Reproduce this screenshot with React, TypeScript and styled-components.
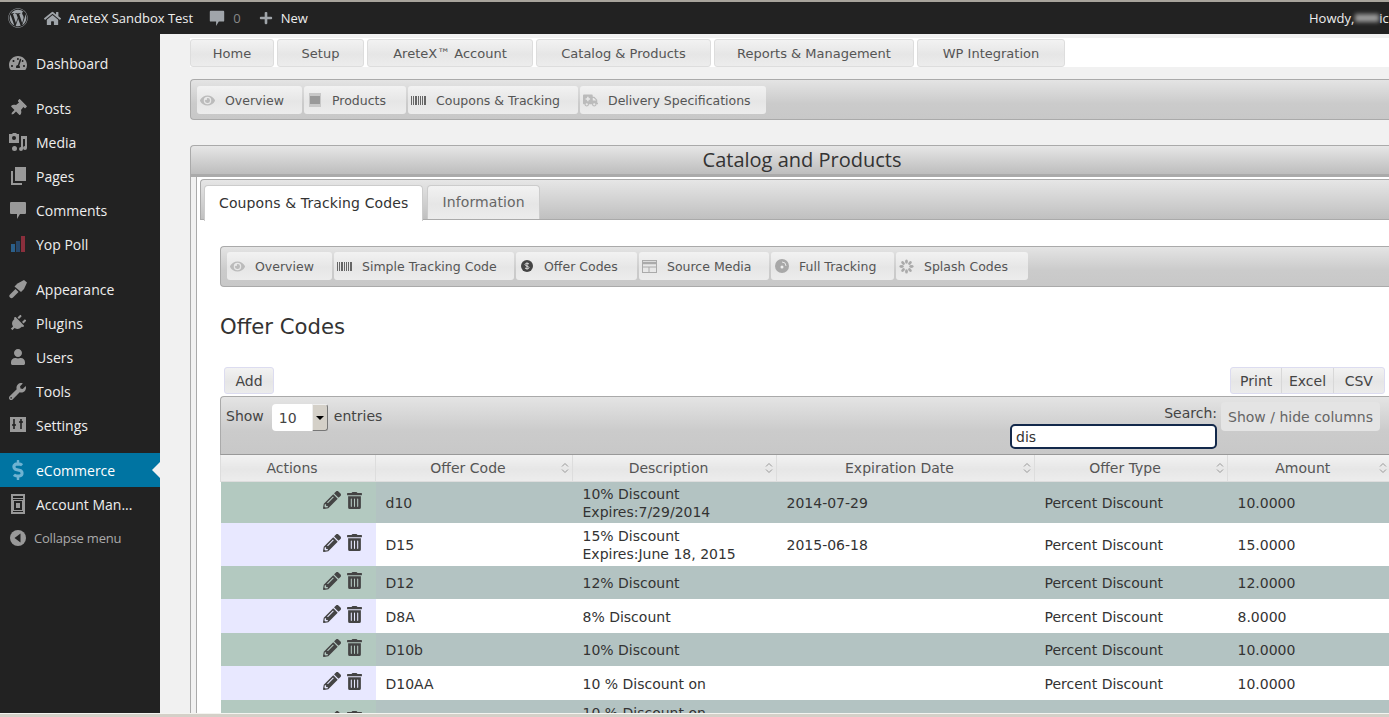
import React from 'react';
import styled, { createGlobalStyle } from 'styled-components';
import {
  FaWordpress, FaHome, FaTachometerAlt, FaThumbtack, FaPlug, FaUser, FaWrench,
  FaDollarSign, FaEye, FaAmbulance, FaPencilAlt, FaTrashAlt, FaPlus,
} from 'react-icons/fa';

const Global = createGlobalStyle`
  html, body { margin: 0; padding: 0; height: 717px; overflow: hidden; background: #f1f1f1; }
  * { box-sizing: border-box; }
`;

const Tilted = styled.span`
  display: flex;
  transform: rotate(45deg);
`;

const Comment = ({ size = 16 }: { size?: number }) => (
  <svg width={size} height={size} viewBox="0 0 20 20" fill="currentColor">
    <path d="M3 2h14a1 1 0 0 1 1 1v10a1 1 0 0 1-1 1h-5l-3 5v-5H3a1 1 0 0 1-1-1V3a1 1 0 0 1 1-1z" />
  </svg>
);

const BrushIcon = () => (
  <svg width="20" height="20" viewBox="0 0 20 20" fill="currentColor">
    <path d="M2 15.5l5.5-5.5 3 3-5.5 5.500c-1 1-2 1-3 0s-1-2 0-3z" />
    <path d="M6.500 7.500l3-3L16 1l3 2.500-3 6.500-3 3z" />
  </svg>
);

const MediaIcon = () => (
  <svg width="20" height="20" viewBox="0 0 20 20" fill="currentColor">
    <path d="M1 2h3l1-1h3l1 1h2v9H1z" />
    <circle cx="6" cy="6" r="2" fill="#222" />
    <path d="M13 4h6v12a2 2 0 1 1-2-2V7h-2v10a2 2 0 1 1-2-2z" />
    <rect x="4" y="14" width="5" height="5" rx="2.5" />
  </svg>
);

const PagesIcon = () => (
  <svg width="20" height="20" viewBox="0 0 20 20" fill="currentColor">
    <path d="M7 1h11v14H7z" />
    <path d="M3 5h2v12h9v2H3z" />
  </svg>
);

const PollIcon = () => (
  <svg width="20" height="20" viewBox="0 0 20 20">
    <rect x="3" y="10" width="4" height="8" fill="#2b5f8a" />
    <rect x="8" y="7" width="4" height="11" fill="#27486b" />
    <rect x="13" y="2" width="4" height="16" fill="#8a2f3c" />
  </svg>
);

const SettingsIcon = () => (
  <svg width="20" height="20" viewBox="0 0 20 20">
    <rect x="2" y="2" width="16" height="15" fill="currentColor" />
    <path d="M6 4v10M13 4v10M4 10h4M11 7h4" stroke="#222" strokeWidth="1.6" />
  </svg>
);

const AccountIcon = () => (
  <svg width="20" height="20" viewBox="0 0 20 20" fill="currentColor">
    <path fillRule="evenodd" d="M3 0h14v20H3zM5 2v2h10V2zM5 5v1h10V5zM6 7v9h8V7zM5 17v1h10v-1z" />
    <rect x="8" y="9" width="4" height="5" />
  </svg>
);

const CollapseIcon = () => (
  <svg width="16" height="16" viewBox="0 0 16 16">
    <circle cx="8" cy="8" r="8" fill="currentColor" />
    <path d="M10.5 3.5v9L4.5 8z" fill="#222" />
  </svg>
);

const Bars = () => (
  <svg width="15" height="9" viewBox="0 0 15 10" fill="#666" preserveAspectRatio="none">
    <path d="M0 0h1v10H0zM2 0h1v10H2zM4 0h2v10H4zM7 0h1v10H7zM9 0h1v10H9zM11 0h1v10h-1zM13 0h2v10h-2z" />
  </svg>
);

const Book = () => (
  <svg width="12" height="14" viewBox="0 0 12 14">
    <rect width="12" height="14" fill="#c8c8c8" />
    <rect x="1" y="3" width="10" height="8" fill="#999" />
  </svg>
);

const CoinDark = () => (
  <svg width="14" height="14" viewBox="0 0 14 14">
    <circle cx="7" cy="7" r="6" fill="#444" />
    <path d="M9 5c-1-1-4-1-4 .6S9 7 9 8.600 6 10 5 9M7 3.500v7" stroke="#ddd" strokeWidth="1" fill="none" />
  </svg>
);

const Sheet = () => (
  <svg width="15" height="13" viewBox="0 0 15 13" fill="none" stroke="#aaa">
    <rect x=".5" y=".5" width="14" height="12" />
    <path d="M1 3h13" strokeWidth="2.500" />
    <path d="M1 7h13M7 7v5" />
  </svg>
);

const Disc = () => (
  <svg width="14" height="14" viewBox="0 0 14 14">
    <circle cx="7" cy="7" r="7" fill="#a8a8a8" />
    <path d="M7 3a4 4 0 0 1 4 4" stroke="#e8e8e8" fill="none" />
    <circle cx="7" cy="8" r="1.5" fill="#eee" />
  </svg>
);

const Splash = () => (
  <svg width="15" height="15" viewBox="0 0 15 15" fill="#aaa">
    {[0, 45, 90, 135, 180, 225, 270, 315].map(a => (
      <ellipse key={a} cx="7.5" cy="2.6" rx="1.4" ry="2.2" transform={`rotate(${a} 7.5 7.5)`} />
    ))}
  </svg>
);

const SortMark = () => (
  <SortIcon width="8" height="12" viewBox="0 0 8 12" fill="none" stroke="#999">
    <path d="M1 4.5L4 1.5l3 3M1 7.5l3 3 3-3" />
  </SortIcon>
);

const sideItems = [
  { group: [{ label: 'Dashboard', icon: <FaTachometerAlt size={18} /> }] },
  {
    group: [
      { label: 'Posts', icon: <Tilted><FaThumbtack size={17} /></Tilted> },
      { label: 'Media', icon: <MediaIcon /> },
      { label: 'Pages', icon: <PagesIcon /> },
      { label: 'Comments', icon: <Comment size={20} /> },
      { label: 'Yop Poll', icon: <PollIcon /> },
    ],
  },
  {
    group: [
      { label: 'Appearance', icon: <BrushIcon /> },
      { label: 'Plugins', icon: <Tilted><FaPlug size={17} /></Tilted> },
      { label: 'Users', icon: <FaUser size={16} /> },
      { label: 'Tools', icon: <FaWrench size={17} /> },
      { label: 'Settings', icon: <SettingsIcon /> },
    ],
  },
];

const mainNav = [
  { label: 'Home', w: 84 },
  { label: 'Setup', w: 87 },
  { label: 'AreteX™ Account', w: 166 },
  { label: 'Catalog & Products', w: 175 },
  { label: 'Reports & Management', w: 200 },
  { label: 'WP Integration', w: 148 },
];

const subNav = [
  { label: 'Overview', w: 105, icon: <FaEye size={15} color="#bbb" /> },
  { label: 'Products', w: 102, icon: <Book /> },
  { label: 'Coupons & Tracking', w: 170, icon: <Bars /> },
  { label: 'Delivery Specifications', w: 186, icon: <FaAmbulance size={15} color="#bbb" /> },
];

const codeNav = [
  { label: 'Overview', w: 105, icon: <FaEye size={15} color="#bbb" /> },
  { label: 'Simple Tracking Code', w: 180, icon: <Bars /> },
  { label: 'Offer Codes', w: 121, icon: <CoinDark /> },
  { label: 'Source Media', w: 130, icon: <Sheet /> },
  { label: 'Full Tracking', w: 123, icon: <Disc /> },
  { label: 'Splash Codes', w: 132, icon: <Splash /> },
];

const columns = ['Offer Code', 'Description', 'Expiration Date', 'Offer Type', 'Amount'];

const rows = [
  { code: 'd10', desc: ['10% Discount', 'Expires:7/29/2014'], date: '2014-07-29', type: 'Percent Discount', amount: '10.0000', h: 42 },
  { code: 'D15', desc: ['15% Discount', 'Expires:June 18, 2015'], date: '2015-06-18', type: 'Percent Discount', amount: '15.0000', h: 43 },
  { code: 'D12', desc: ['12% Discount'], date: '', type: 'Percent Discount', amount: '12.0000', h: 33 },
  { code: 'D8A', desc: ['8% Discount'], date: '', type: 'Percent Discount', amount: '8.0000', h: 34 },
  { code: 'D10b', desc: ['10% Discount'], date: '', type: 'Percent Discount', amount: '10.0000', h: 33 },
  { code: 'D10AA', desc: ['10 % Discount on'], date: '', type: 'Percent Discount', amount: '10.0000', h: 34 },
  { code: '', desc: ['10 % Discount on', '\u00a0'], date: '', type: '', amount: '', h: 43 },
];

function App() {
  return (
    <Page>
      <Global />
      <TopEdge />
      <AdminBar>
        <LogoSlot><FaWordpress size={20} /></LogoSlot>
        <BarItem $left={9}><FaHome size={17} color="#a0a5aa" /><span>AreteX Sandbox Test</span></BarItem>
        <BarItem $left={7}><CommentTint><Comment size={18} /></CommentTint><Muted>0</Muted></BarItem>
        <BarItem $left={10} $gap={8}><FaPlus size={14} color="#a0a5aa" /><span>New</span></BarItem>
        <Howdy>Howdy,<Blurred />ic</Howdy>
      </AdminBar>
      <Body>
        <Sidebar>
          {sideItems.map((s, i) => (
            <SideGroup key={i}>
              {s.group.map(it => (
                <SideItem key={it.label}><SideIcon>{it.icon}</SideIcon>{it.label}</SideItem>
              ))}
            </SideGroup>
          ))}
          <SideGroup>
            <SideItem $active><SideIcon $active><FaDollarSign size={20} /></SideIcon>eCommerce</SideItem>
            <SideItem><SideIcon><AccountIcon /></SideIcon>Account Man...</SideItem>
            <CollapseItem><CollapseSlot><CollapseIcon /></CollapseSlot>Collapse menu</CollapseItem>
          </SideGroup>
        </Sidebar>
        <Main>
          <MainNav>
            {mainNav.map(n => <NavButton key={n.label} $w={n.w}>{n.label}</NavButton>)}
          </MainNav>
          <IconBar>
            {subNav.map(n => <IconTab key={n.label} $w={n.w}><IconSlot>{n.icon}</IconSlot>{n.label}</IconTab>)}
          </IconBar>
          <PanelHead>Catalog and Products</PanelHead>
          <PanelOuter>
            <PanelInner>
              <TabStrip>
                <Tab $active>Coupons &amp; Tracking Codes</Tab>
                <Tab>Information</Tab>
              </TabStrip>
              <TabBody>
                <CodeBar>
                  {codeNav.map(n => <IconTab key={n.label} $w={n.w}><IconSlot>{n.icon}</IconSlot>{n.label}</IconTab>)}
                </CodeBar>
                <Heading>Offer Codes</Heading>
                <ActionRow>
                  <PlainButton>Add</PlainButton>
                  <ButtonGroup>
                    <GroupButton>Print</GroupButton>
                    <GroupButton>Excel</GroupButton>
                    <GroupButton>CSV</GroupButton>
                  </ButtonGroup>
                </ActionRow>
                <TableTools>
                  <LengthBox>
                    Show
                    <FakeSelect><span>10</span><SelectArrow /></FakeSelect>
                    entries
                  </LengthBox>
                  <RightTools>
                    <SearchBox>
                      <label>Search:</label>
                      <SearchInput defaultValue="dis" />
                    </SearchBox>
                    <ColumnsButton>Show / hide columns</ColumnsButton>
                  </RightTools>
                </TableTools>
                <CodesTable>
                  <colgroup>
                    {[155, 197, 204, 258, 193, 162].map((w, i) => <col key={i} width={w} />)}
                  </colgroup>
                  <thead>
                    <tr>
                      <Th>Actions</Th>
                      {columns.map(c => <Th key={c}>{c}<SortMark /></Th>)}
                    </tr>
                  </thead>
                  <tbody>
                    {rows.map((r, i) => (
                      <Row key={i} $odd={i % 2 === 0} style={{ height: r.h }}>
                        <ActionCell $odd={i % 2 === 0}>
                          <Actions><FaPencilAlt size={18} /><FaTrashAlt size={17} /></Actions>
                        </ActionCell>
                        <Td>{r.code}</Td>
                        <Td>{r.desc.map(d => <div key={d}>{d}</div>)}</Td>
                        <Td>{r.date}</Td>
                        <Td>{r.type}</Td>
                        <Td>{r.amount}</Td>
                      </Row>
                    ))}
                  </tbody>
                </CodesTable>
              </TabBody>
            </PanelInner>
          </PanelOuter>
        </Main>
      </Body>
      <BottomEdge />
    </Page>
  );
}

export default App;

const uiFont = `"DejaVu Sans", Verdana, sans-serif`;
const wpFont = `"Open Sans", sans-serif`;
const buttonBg = `linear-gradient(#f2f2f2, #e6e6e6 55%, #ececec)`;
const barBg = `linear-gradient(#e4e4e4, #cbcbcb 60%, #c8c8c8)`;

const Page = styled.div`
  width: 1389px;
  height: 717px;
  display: flex;
  flex-direction: column;
  overflow: hidden;
  font-family: ${uiFont};
`;
const TopEdge = styled.div`
  height: 2px;
  flex: none;
  background: #a8a49c;
`;
const BottomEdge = styled.div`
  height: 4px;
  flex: none;
  background: #d4d0c8;
  border-top: 1px solid #f4f4f0;
`;
const AdminBar = styled.div`
  height: 32px;
  flex: none;
  display: flex;
  align-items: center;
  background: #222;
  color: #eee;
  font: 13px ${wpFont};
`;
const LogoSlot = styled.div`
  width: 35px;
  display: flex;
  justify-content: center;
  color: #a0a5aa;
`;
const BarItem = styled.div<{ $left: number; $gap?: number }>`
  display: flex;
  align-items: center;
  gap: ${p => p.$gap ?? 7}px;
  margin-left: ${p => p.$left}px;
  margin-right: 8px;
`;
const CommentTint = styled.span`
  display: flex;
  color: #a0a5aa;
`;
const Muted = styled.span`
  color: #888;
`;
const Howdy = styled.div`
  margin-left: auto;
  white-space: nowrap;
  display: flex;
  align-items: center;
  width: 80px;
  overflow: hidden;
`;
const Blurred = styled.span`
  width: 24px;
  height: 8px;
  margin-left: 1px;
  flex: none;
  background: #9a9a9a;
  filter: blur(2px);
`;
const Body = styled.div`
  flex: 1;
  display: flex;
  min-height: 0;
`;
const Sidebar = styled.nav`
  width: 160px;
  flex: none;
  padding-top: 12px;
  background: #222;
  color: #eee;
  font: 14px ${wpFont};
`;
const SideGroup = styled.div`
  margin-bottom: 11px;
`;
const SideItem = styled.div<{ $active?: boolean }>`
  height: 34px;
  display: flex;
  align-items: center;
  position: relative;
  white-space: nowrap;
  color: ${p => (p.$active ? '#fff' : '#eee')};
  background: ${p => (p.$active ? '#0074a2' : 'transparent')};
  ${p => p.$active && `
    &::after {
      content: '';
      position: absolute;
      right: 0;
      top: 9px;
      border: 8px solid transparent;
      border-right-color: #f1f1f1;
      border-left-width: 0;
    }
  `}
`;
const CollapseItem = styled(SideItem)`
  color: #aaa;
  font-size: 13px;
  letter-spacing: -0.2px;
`;
const SideIcon = styled.span<{ $active?: boolean }>`
  width: 36px;
  flex: none;
  display: flex;
  justify-content: center;
  padding-right: 1px;
  color: ${p => (p.$active ? '#6fb3d2' : '#999')};
`;
const CollapseSlot = styled(SideIcon)`
  width: 34px;
  padding-right: 0;
  padding-left: 1px;
`;
const Main = styled.main`
  flex: 1;
  min-width: 0;
  padding: 4px 0 0 30px;
  background: #f1f1f1;
  overflow: hidden;
`;
const MainNav = styled.div`
  height: 29px;
  display: flex;
  gap: 3px;
  background: #fff;
  padding-top: 1px;
`;
const NavButton = styled.div<{ $w: number }>`
  width: ${p => p.$w}px;
  height: 28px;
  display: flex;
  align-items: center;
  justify-content: center;
  white-space: nowrap;
  font-size: 13px;
  color: #555;
  background: ${buttonBg};
  border: 1px solid #ddd;
  border-radius: 3px;
`;
const IconBar = styled.div`
  height: 41px;
  margin-top: 12px;
  padding: 6px 6px 0;
  display: flex;
  gap: 2px;
  background: ${barBg};
  border: 1px solid #aaa;
  border-right: none;
  border-radius: 4px 0 0 4px;
`;
const CodeBar = styled(IconBar)`
  margin-top: 0;
  padding-top: 5px;
`;
const IconTab = styled.div<{ $w: number }>`
  width: ${p => p.$w}px;
  height: 28px;
  padding-left: 3px;
  display: flex;
  align-items: center;
  white-space: nowrap;
  font-size: 12.5px;
  color: #555;
  background: ${buttonBg};
  border-radius: 3px;
`;
const IconSlot = styled.span`
  width: 15px;
  margin-right: 10px;
  display: flex;
  justify-content: center;
`;
const PanelHead = styled.div`
  height: 32px;
  margin-top: 25px;
  padding: 0 0 2px 24px;
  display: flex;
  align-items: center;
  justify-content: center;
  font: 20px ${wpFont};
  color: #333;
  background: linear-gradient(#e6e6e6, #bdbdbd);
  border: 1px solid #aaa;
  border-bottom: 3px solid #aaa;
  border-right: none;
  border-radius: 4px 0 0 0;
`;
const PanelOuter = styled.div`
  padding-left: 5px;
  border-left: 1px solid #aaa;
`;
const PanelInner = styled.div`
  padding: 2px 0 0 3px;
  background: #fff;
  border-left: 1px solid #aaa;
  height: 540px;
`;
const TabStrip = styled.div`
  height: 41px;
  padding: 5px 0 0 3px;
  display: flex;
  gap: 4px;
  background: linear-gradient(#e6e6e6, #c0c0c0);
  border: 1px solid #aaa;
  border-right: none;
  border-radius: 4px 0 0 0;
`;
const Tab = styled.div<{ $active?: boolean }>`
  height: ${p => (p.$active ? 36 : 34)}px;
  padding: 0 14px 2px;
  display: flex;
  align-items: center;
  white-space: nowrap;
  font-size: 14px;
  letter-spacing: 0.12px;
  color: ${p => (p.$active ? '#333' : '#666')};
  background: ${p => (p.$active ? '#fff' : buttonBg)};
  border: 1px solid #ccc;
  border-bottom: none;
  border-radius: 4px 4px 0 0;
`;
const TabBody = styled.div`
  padding: 26px 0 0 20px;
`;
const Heading = styled.h2`
  margin: 27px 0 0;
  height: 53px;
  font-size: 21.2px;
  font-weight: 400;
  line-height: 26px;
  color: #333;
`;
const ActionRow = styled.div`
  height: 29px;
  padding: 0 4px;
  display: flex;
  justify-content: space-between;
`;
const PlainButton = styled.div`
  width: 50px;
  height: 27px;
  display: flex;
  align-items: center;
  justify-content: center;
  font-size: 14px;
  color: #444;
  background: ${buttonBg};
  border: 1px solid #dcdcf0;
  border-radius: 3px;
`;
const ButtonGroup = styled.div`
  width: 155px;
  height: 27px;
  display: flex;
  background: ${buttonBg};
  border: 1px solid #dcdcf0;
  border-radius: 3px;
`;
const GroupButton = styled.div`
  flex: 1;
  display: flex;
  align-items: center;
  justify-content: center;
  font-size: 14px;
  color: #444;
  & + & {
    border-left: 1px solid #d8d8d8;
  }
`;
const TableTools = styled.div`
  height: 59px;
  padding: 7px 9px 0 5px;
  display: flex;
  justify-content: space-between;
  align-items: flex-start;
  background: ${barBg};
  border: 1px solid #aaa;
  border-bottom: 1px solid #999;
  border-right: none;
  border-radius: 4px 0 0 0;
  font-size: 14px;
  color: #444;
`;
const LengthBox = styled.div`
  display: flex;
  align-items: flex-start;
  gap: 7px;
  line-height: 24px;
`;
const FakeSelect = styled.div`
  width: 56px;
  height: 27px;
  margin: 0 -1px 0 1px;
  display: flex;
  background: #fff;
  border-radius: 4px;
  font-size: 14px;
  line-height: 28px;
  span {
    flex: 1;
    padding-left: 7px;
  }
`;
const SelectArrow = styled.div`
  width: 16px;
  position: relative;
  background: #d4d0c8;
  border: 1px solid #777;
  border-top-color: #eee;
  border-left-color: #eee;
  border-radius: 0 3px 3px 0;
  &::after {
    content: '';
    position: absolute;
    left: 3px;
    top: 11px;
    border: 4px solid transparent;
    border-top-color: #000;
  }
`;
const RightTools = styled.div`
  display: flex;
  gap: 4px;
  align-items: flex-start;
  margin-top: -2px;
`;
const SearchBox = styled.div`
  width: 207px;
  display: flex;
  flex-direction: column;
  align-items: flex-end;
  label {
    line-height: 20px;
    margin-top: 1px;
  }
`;
const SearchInput = styled.input`
  width: 207px;
  height: 25px;
  padding: 0 4px;
  margin-top: 1px;
  font: 14px ${uiFont};
  color: #333;
  background: #fff;
  border: 2px solid #13294b;
  border-radius: 5px;
  outline: none;
`;
const ColumnsButton = styled.div`
  width: 159px;
  height: 29px;
  display: flex;
  align-items: center;
  justify-content: center;
  white-space: nowrap;
  font-size: 14px;
  color: #666;
  background: #e4e4e4;
  border-radius: 4px;
`;
const CodesTable = styled.table`
  width: 1169px;
  table-layout: fixed;
  border-collapse: collapse;
  font-size: 14px;
  color: #333;
`;
const Th = styled.th`
  height: 26px;
  position: relative;
  padding: 0 12px 0 0;
  text-align: center;
  font-weight: 400;
  font-size: 14px;
  color: #555;
  background: ${buttonBg};
  border-left: 1px solid #ddd;
  border-bottom: 1px solid #ddd;
`;
const SortIcon = styled.svg`
  position: absolute;
  right: 3px;
  top: 7px;
`;
const Row = styled.tr<{ $odd: boolean }>`
  background: ${p => (p.$odd ? '#b3c3c2' : '#fff')};
`;
const ActionCell = styled.td<{ $odd: boolean }>`
  padding: 0 13px 4px 0;
  background: ${p => (p.$odd ? '#b3c9c0' : '#e8e8ff')};
`;
const Actions = styled.div`
  display: flex;
  justify-content: flex-end;
  align-items: center;
  gap: 5px;
  color: #444;
`;
const Td = styled.td`
  padding: 1px 10px 0;
  line-height: 18px;
  white-space: nowrap;
  overflow: hidden;
`;
